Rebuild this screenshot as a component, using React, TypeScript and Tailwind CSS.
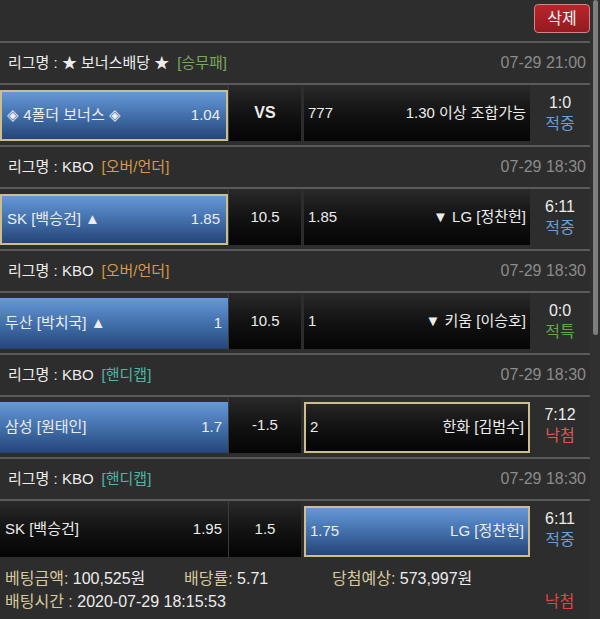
import React from "react";

type Cell = { a: string; b: string; kind: "blue" | "blueB" | "black" | "blackB" };
type Row = {
  league: string;
  cat: string;
  catColor: string;
  date: string;
  left: Cell;
  mid: string;
  midBold?: boolean;
  right: Cell;
  score: string;
  res: string;
  resColor: string;
};

const rows: Row[] = [
  {
    league: "리그명 : ★ 보너스배당 ★",
    cat: "[승무패]",
    catColor: "text-[#79a85a]",
    date: "07-29 21:00",
    left: { a: "◈ 4폴더 보너스 ◈", b: "1.04", kind: "blueB" },
    mid: "VS",
    midBold: true,
    right: { a: "777", b: "1.30 이상 조합가능", kind: "black" },
    score: "1:0",
    res: "적중",
    resColor: "text-[#6b9dd6]",
  },
  {
    league: "리그명 : KBO",
    cat: "[오버/언더]",
    catColor: "text-[#d59a48]",
    date: "07-29 18:30",
    left: { a: "SK [백승건] ▲", b: "1.85", kind: "blueB" },
    mid: "10.5",
    right: { a: "1.85", b: "▼ LG [정찬헌]", kind: "black" },
    score: "6:11",
    res: "적중",
    resColor: "text-[#6b9dd6]",
  },
  {
    league: "리그명 : KBO",
    cat: "[오버/언더]",
    catColor: "text-[#d59a48]",
    date: "07-29 18:30",
    left: { a: "두산 [박치국] ▲", b: "1", kind: "blue" },
    mid: "10.5",
    right: { a: "1", b: "▼ 키움 [이승호]", kind: "black" },
    score: "0:0",
    res: "적특",
    resColor: "text-[#65a64a]",
  },
  {
    league: "리그명 : KBO",
    cat: "[핸디캡]",
    catColor: "text-[#4db5a6]",
    date: "07-29 18:30",
    left: { a: "삼성 [원태인]", b: "1.7", kind: "blue" },
    mid: "-1.5",
    right: { a: "2", b: "한화 [김범수]", kind: "blackB" },
    score: "7:12",
    res: "낙첨",
    resColor: "text-[#e05656]",
  },
  {
    league: "리그명 : KBO",
    cat: "[핸디캡]",
    catColor: "text-[#4db5a6]",
    date: "07-29 18:30",
    left: { a: "SK [백승건]", b: "1.95", kind: "black" },
    mid: "1.5",
    right: { a: "1.75", b: "LG [정찬헌]", kind: "blueB" },
    score: "6:11",
    res: "적중",
    resColor: "text-[#6b9dd6]",
  },
];

function BetCell({ c, w, first }: { c: Cell; w: string; first?: boolean }) {
  const pad = first ? "pl-[5px] pr-[6px]" : "pl-[4px] pr-[4px]";
  if (c.kind === "black") {
    return (
      <div
        className={`${w} h-[56px] flex items-center justify-between ${pad} bg-gradient-to-b from-[#2a2a2a] via-[#131313] to-[#050505]`}
      >
        <span>{c.a}</span>
        <span>{c.b}</span>
      </div>
    );
  }
  if (c.kind === "blackB") {
    return (
      <div
        className={`${w} h-[51px] flex items-center justify-between ${pad} border-2 border-[#cdbf8b] bg-gradient-to-b from-[#262626] via-[#121212] to-[#050505]`}
      >
        <span>{c.a}</span>
        <span>{c.b}</span>
      </div>
    );
  }
  if (c.kind === "blueB") {
    return (
      <div
        className={`${w} h-[51px] flex items-center justify-between ${pad} border-2 border-[#cdbf8b] bg-gradient-to-b from-[#6598d8] via-[#4370ab] to-[#254679]`}
      >
        <span>{c.a}</span>
        <span>{c.b}</span>
      </div>
    );
  }
  return (
    <div
      className={`${w} h-[51px] flex items-center justify-between ${pad} bg-gradient-to-b from-[#6598d8] via-[#4370ab] to-[#254679]`}
    >
      <span>{c.a}</span>
      <span>{c.b}</span>
    </div>
  );
}

export default function App() {
  return (
    <div className="w-[600px] h-[619px] overflow-hidden bg-[#2d2d2d] flex font-['Liberation_Sans','Noto_Sans_CJK_KR',sans-serif] text-[#ececec] text-[15px]">
      <div className="w-[590px] flex flex-col">
        <div className="h-[41px] flex justify-end items-start pt-[4px]">
          <button className="w-[56px] h-[29px] rounded-[4px] border border-[#cf8585] bg-gradient-to-b from-[#b9262c] to-[#941a1f] text-[#f4f4f4] text-[16px] flex items-center justify-center">
            삭제
          </button>
        </div>
        {rows.map((r, i) => (
          <div key={i} className="flex flex-col">
            <div className="h-[42px] border-t-2 border-[#5a5a5a] flex items-center justify-between pl-[8px] pr-[4px]">
              <div className="flex items-center">
                <span>{r.league}</span>
                <span className={`ml-[8px] ${r.catColor}`}>{r.cat}</span>
              </div>
              <span className="text-[#8b8b8b] text-[16px]">{r.date}</span>
            </div>
            <div className="h-[62px] border-t-2 border-[#5a5a5a] flex items-end pb-[4px]">
              <BetCell c={r.left} w="w-[228px]" first />
              <div className="w-[1px] h-[56px] bg-[#3c3c3c]" />
              <div
                className={`w-[72px] h-[56px] flex items-center justify-center bg-gradient-to-b from-[#2a2a2a] via-[#131313] to-[#050505] ${
                  r.midBold ? "font-bold text-[16px]" : ""
                }`}
              >
                {r.mid}
              </div>
              <div className="w-[3px]" />
              <BetCell c={r.right} w="w-[226px]" />
              <div className="flex-1 h-[56px] flex flex-col items-center justify-center leading-[21px] text-[16px]">
                <span>{r.score}</span>
                <span className={r.resColor}>{r.res}</span>
              </div>
            </div>
          </div>
        ))}
        <div className="flex flex-col pt-[6px] text-[16px] leading-[23px]">
          <div className="flex pl-[5px]">
            <span className="w-[179px]">
              <span className="text-[#d8c99e]">베팅금액:</span> 100,525원
            </span>
            <span className="w-[148px]">
              <span className="text-[#d8c99e]">배당률:</span> 5.71
            </span>
            <span>
              <span className="text-[#d8c99e]">당첨예상:</span> 573,997원
            </span>
          </div>
          <div className="flex pl-[5px] justify-between">
            <span>
              <span className="text-[#d8c99e]">배팅시간 :</span> 2020-07-29 18:15:53
            </span>
            <span className="w-[61px] text-center text-[#e04444]">낙첨</span>
          </div>
        </div>
      </div>
      <div className="w-[10px] pl-[3px] pr-[2px] bg-[#303030]">
        <div className="h-[335px] rounded-full bg-[#7e7e7e]" />
      </div>
    </div>
  );
}
